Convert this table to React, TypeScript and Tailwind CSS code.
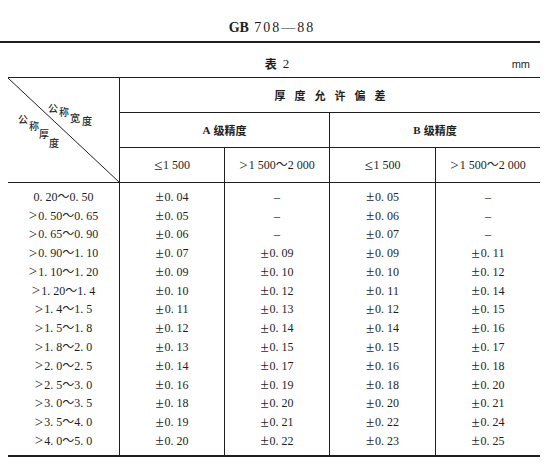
import React from "react";

const rows: string[][] = [
  ["0. 20～0. 50", "±0. 04", "–", "±0. 05", "–"],
  [">0. 50～0. 65", "±0. 05", "–", "±0. 06", "–"],
  [">0. 65～0. 90", "±0. 06", "–", "±0. 07", "–"],
  [">0. 90～1. 10", "±0. 07", "±0. 09", "±0. 09", "±0. 11"],
  [">1. 10～1. 20", "±0. 09", "±0. 10", "±0. 10", "±0. 12"],
  [">1. 20～1. 4", "±0. 10", "±0. 12", "±0. 11", "±0. 14"],
  [">1. 4～1. 5", "±0. 11", "±0. 13", "±0. 12", "±0. 15"],
  [">1. 5～1. 8", "±0. 12", "±0. 14", "±0. 14", "±0. 16"],
  [">1. 8～2. 0", "±0. 13", "±0. 15", "±0. 15", "±0. 17"],
  [">2. 0～2. 5", "±0. 14", "±0. 17", "±0. 16", "±0. 18"],
  [">2. 5～3. 0", "±0. 16", "±0. 19", "±0. 18", "±0. 20"],
  [">3. 0～3. 5", "±0. 18", "±0. 20", "±0. 20", "±0. 21"],
  [">3. 5～4. 0", "±0. 19", "±0. 21", "±0. 22", "±0. 24"],
  [">4. 0～5. 0", "±0. 20", "±0. 22", "±0. 23", "±0. 25"],
];

const diagChars: { c: string; x: number; y: number }[] = [
  { c: "公", x: 45, y: 30 },
  { c: "称", x: 56, y: 34 },
  { c: "宽", x: 67, y: 40 },
  { c: "度", x: 79, y: 43 },
  { c: "公", x: 15, y: 41 },
  { c: "称", x: 26, y: 48 },
  { c: "厚", x: 36, y: 56 },
  { c: "度", x: 46, y: 65 },
];

const cjk = "font-['Noto_Sans_CJK_SC',sans-serif]";

function Txt({ s }: { s: string }) {
  const parts: React.ReactNode[] = [];
  let buf = "";
  let k = 0;
  for (const ch of s) {
    if (ch === "±" || ch === ">" || ch === "≤") {
      if (buf) parts.push(<span key={k++}>{buf}</span>);
      buf = "";
      parts.push(
        <span key={k++} className="text-[15px] leading-none mr-[1px]">
          {ch}
        </span>
      );
    } else {
      buf += ch;
    }
  }
  if (buf) parts.push(<span key={k++}>{buf}</span>);
  return <>{parts}</>;
}

export default function App() {
  return (
    <div className="w-[554px] h-[467px] bg-white text-[#1e1e1e] font-['Liberation_Serif','Noto_Sans_CJK_SC',serif] overflow-hidden">
      {/* Title */}
      <div className="h-[41px] flex items-end justify-center pr-[10px] pb-[6px]">
        <span className="text-[14px] leading-none">
          <span className="font-bold">GB</span>
          <span className="tracking-[2px]"> 708—88</span>
        </span>
      </div>
      <div className="w-[540px] h-[2px] bg-[#1e1e1e]" />

      {/* Caption */}
      <div className="w-[540px] h-[34px] grid grid-cols-[1fr_auto_1fr] items-end pb-[7px]">
        <div />
        <div className="text-[13px] leading-none flex items-end gap-[6px] pl-[14px]">
          <span className={`${cjk} font-bold text-[12px]`}>表</span>
          <span>2</span>
        </div>
        <div className="flex justify-end pr-[10px] text-[11px] leading-none font-['Liberation_Sans',sans-serif]">
          mm
        </div>
      </div>

      {/* Table */}
      <div className="ml-[8px] w-[532px] border-t-[1.5px] border-[#1e1e1e]">
        <div className="grid grid-cols-[112px_105px_105px_106px_104px] grid-rows-[35px_35px_34px] border-b border-[#1e1e1e] text-[12px]">
          <div className="row-span-3 relative border-r border-[#1e1e1e]">
            <svg
              className="absolute inset-0 w-full h-full"
              viewBox="0 0 100 100"
              preserveAspectRatio="none"
            >
              <line
                x1="0"
                y1="0"
                x2="100"
                y2="100"
                stroke="#1e1e1e"
                strokeWidth="1"
                vectorEffect="non-scaling-stroke"
              />
            </svg>
            {diagChars.map((d, i) => (
              <span
                key={i}
                className={`absolute text-[10px] leading-none font-medium text-[#2a2a2a] ${cjk}`}
                style={{ left: d.x - 5, top: d.y - 5 }}
              >
                {d.c}
              </span>
            ))}
          </div>
          <div className={`col-span-4 border-b border-[#1e1e1e] flex items-center justify-center text-[11px] font-bold tracking-[9px] pl-[9px] ${cjk}`}>
            厚度允许偏差
          </div>
          <div className="col-span-2 border-b border-r border-[#1e1e1e] flex items-center justify-center text-[11px]">
            <span className="font-['Liberation_Serif',serif] font-bold mr-[3px]">A</span>
            <span className={`${cjk} font-bold`}>级精度</span>
          </div>
          <div className="col-span-2 border-b border-[#1e1e1e] flex items-center justify-center text-[11px]">
            <span className="font-['Liberation_Serif',serif] font-bold mr-[3px]">B</span>
            <span className={`${cjk} font-bold`}>级精度</span>
          </div>
          <div className="border-r border-[#1e1e1e] flex items-center justify-center">
            <Txt s="≤1 500" />
          </div>
          <div className="border-r border-[#1e1e1e] flex items-center justify-center">
            <Txt s=">1 500～2 000" />
          </div>
          <div className="border-r border-[#1e1e1e] flex items-center justify-center">
            <Txt s="≤1 500" />
          </div>
          <div className="flex items-center justify-center">
            <Txt s=">1 500～2 000" />
          </div>
        </div>

        <div className="grid grid-cols-[112px_105px_105px_106px_104px] border-b-2 border-[#1e1e1e] text-[12px]">
          {[0, 1, 2, 3, 4].map((c) => (
            <div
              key={c}
              className={`flex flex-col pt-[4.5px] pb-[5px] ${c < 4 ? "border-r border-[#1e1e1e]" : ""}`}
            >
              {rows.map((r, i) => (
                <div key={i} className="h-[18.77px] flex items-center justify-center leading-none whitespace-pre">
                  <Txt s={r[c]} />
                </div>
              ))}
            </div>
          ))}
        </div>
      </div>
    </div>
  );
}
